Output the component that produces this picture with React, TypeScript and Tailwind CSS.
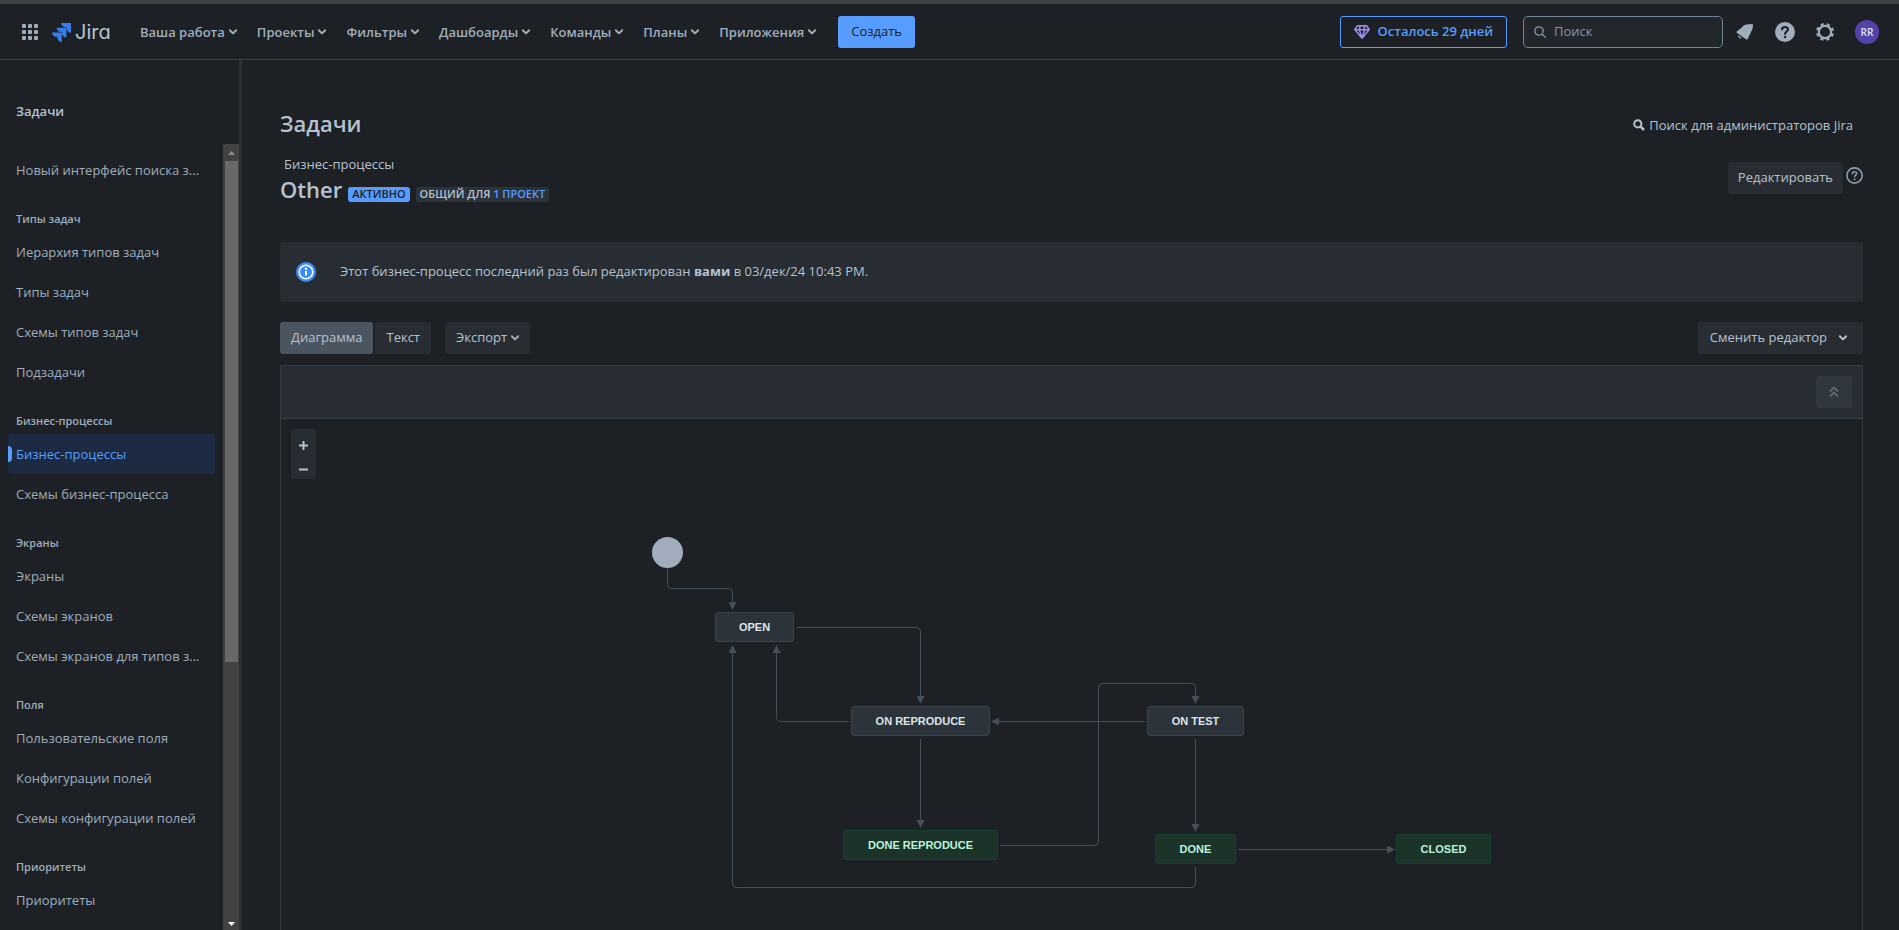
import type { ReactNode } from "react";

const menuItems = ["Ваша работа", "Проекты", "Фильтры", "Дашбоарды", "Команды", "Планы", "Приложения"];

const sections = [
  { title: "Типы задач", items: ["Иерархия типов задач", "Типы задач", "Схемы типов задач", "Подзадачи"] },
  { title: "Бизнес-процессы", items: ["Бизнес-процессы", "Схемы бизнес-процесса"] },
  { title: "Экраны", items: ["Экраны", "Схемы экранов", "Схемы экранов для типов з..."] },
  { title: "Поля", items: ["Пользовательские поля", "Конфигурации полей", "Схемы конфигурации полей"] },
  { title: "Приоритеты", items: ["Приоритеты"] },
];

type Status = { name: string; done?: boolean; x: number; y: number; w: number };

const statuses: Status[] = [
  { name: "OPEN", x: 64, y: 75, w: 79 },
  { name: "ON REPRODUCE", x: 200, y: 169, w: 139 },
  { name: "DONE REPRODUCE", done: true, x: 192, y: 293, w: 155 },
  { name: "ON TEST", x: 496, y: 169, w: 97 },
  { name: "DONE", done: true, x: 504, y: 297, w: 81 },
  { name: "CLOSED", done: true, x: 745, y: 297, w: 95 },
];

const edges = [
  "M16.5 31V47.5Q16.5 51.5 20.5 51.5H77.5Q81.5 51.5 81.5 55.5V65",
  "M146 90.5H265.5Q269.5 90.5 269.5 94.5V159",
  "M198 184.5H130.5Q125.5 184.5 125.5 180.5V116",
  "M494 184.5H348",
  "M269.5 202V283",
  "M349 308.5H443.5Q447.5 308.5 447.5 304.5V150.5Q447.5 146.5 451.5 146.5H540.5Q544.5 146.5 544.5 150.5V159",
  "M544.5 202V287",
  "M587 312.5H736",
  "M544.5 330V346.5Q544.5 350.5 540.5 350.5H85.5Q81.5 350.5 81.5 346.5V116",
];

function Chevron({ className = "" }: { className?: string }) {
  return (
    <svg viewBox="0 0 8 6" className={`h-[6px] w-2 shrink-0 ${className}`} fill="none" stroke="currentColor" strokeWidth="2" aria-hidden="true">
      <path d="M.8 1.2 4 4.4 7.2 1.2" strokeLinecap="round" strokeLinejoin="round" />
    </svg>
  );
}

function IconButton({ label, children }: { label: string; children: ReactNode }) {
  return (
    <button aria-label={label} className="flex size-8 items-center justify-center rounded-full text-[#9fadbc]">
      {children}
    </button>
  );
}

function Header() {
  return (
    <header className="flex h-[60px] shrink-0 items-center border-t-4 border-b border-t-[#404142] border-b-[#38414a] pt-px pr-5 pl-[14px]">
      <button aria-label="Приложения Atlassian" className="flex size-8 items-center justify-center text-[#9fadbc]">
        <svg viewBox="0 0 16 16" className="size-4" fill="currentColor">
          {[0, 6, 12].map((y) => [0, 6, 12].map((x) => <rect key={`${x}-${y}`} x={x} y={y} width="4" height="4" rx="1" />))}
        </svg>
      </button>
      <a href="#" className="ml-1.5 flex w-[58px] items-center gap-1 text-[#b6c2cf]">
        <svg viewBox="0 0 19 19" className="size-[19px] shrink-0" aria-hidden="true">
          <path fill="#357de8" d="M9.2 0H19v9.8a4.4 4.4 0 0 1-4.4-4.4V4.4h-1A4.4 4.4 0 0 1 9.2 0Z" />
          <path fill="#357de8" d="M4.6 4.7h9.8v9.8A4.4 4.4 0 0 1 10 10.1V9.1H9a4.4 4.4 0 0 1-4.4-4.4Z" />
          <path fill="#357de8" d="M0 9.4h9.8v9.6a4.4 4.4 0 0 1-4.4-4.4v-.8H4.4A4.4 4.4 0 0 1 0 9.4Z" />
        </svg>
        <span className="font-[Inter,sans-serif] text-[20px] leading-6 [font-feature-settings:'cv11']">Jira</span>
      </a>
      <nav className="ml-[30px] flex items-center gap-5">
        {menuItems.map((item) => (
          <button key={item} className="flex items-center gap-1 text-[13px] leading-5 font-semibold whitespace-nowrap text-[#9fadbc]">
            {item}
            <Chevron />
          </button>
        ))}
      </nav>
      <button className="ml-[22px] h-8 rounded-[3px] bg-[#579dff] px-[13px] text-[13px] font-medium text-[#1d2125]">Создать</button>
      <button className="ml-auto flex h-8 shrink-0 items-center gap-2 rounded-[3px] border border-[#579dff] px-[13px] text-[13px] font-semibold whitespace-nowrap text-[#579dff]">
        <svg viewBox="0 0 16 14" className="h-[14px] w-4" fill="none" stroke="#9f8fef" strokeWidth="1.5" strokeLinejoin="round" aria-hidden="true">
          <path d="M3.5.8h9L15.2 4.5 8 13.2.8 4.5ZM.8 4.7h14.4M5.3 4.7 8 13l2.7-8.3M5.3 4.7 6.2.8M10.7 4.7 9.8.8" />
        </svg>
        Осталось 29 дней
      </button>
      <label className="ml-4 flex h-8 w-[200px] items-center gap-2 rounded-[5px] border border-[#738496] bg-[#22272b] pl-2.5 text-[#8696a7]">
        <svg viewBox="0 0 12 12" className="size-3 shrink-0" fill="none" stroke="currentColor" strokeWidth="1.3" aria-hidden="true">
          <circle cx="5" cy="5" r="4.2" />
          <path d="m8.2 8.2 3.2 3.2" strokeLinecap="round" />
        </svg>
        <input type="search" aria-label="Поиск" placeholder="Поиск" className="w-full min-w-0 bg-transparent text-[13px] outline-none placeholder:text-[#8696a7]" />
      </label>
      <div className="ml-1.5 flex items-center gap-2">
        <IconButton label="Уведомления">
          <svg viewBox="0 0 18 18" className="size-[18px]" fill="currentColor">
            <path d="M16 1.1 10.8 1.5C8.8 1.7 7.6 2.5 6.3 3.9L.8 8.6c-.5.5-.4 1 .2 1.3l9.4 6.7c.6.4 1.1.2 1.3-.5L15 9c1-1.7 1.5-2.6 1.7-4.4L17 1.9c0-.5-.4-.9-1-.8Z" />
            <path d="M2.2 12.2a2.5 2.5 0 0 0 3.7 2.7Z" />
          </svg>
        </IconButton>
        <IconButton label="Справка">
          <svg viewBox="0 0 20 20" className="size-5">
            <circle cx="10" cy="10" r="10" fill="currentColor" />
            <path d="M7 7.6C7 5.8 8.3 4.9 10 4.9s3 1 3 2.5c0 1.9-2.9 2.2-2.9 4.5" fill="none" stroke="#1d2125" strokeWidth="2" strokeLinecap="round" />
            <circle cx="10.1" cy="15" r="1.2" fill="#1d2125" />
          </svg>
        </IconButton>
        <IconButton label="Настройки">
          <svg viewBox="0 0 18 18" className="size-[18px]" fill="none" stroke="currentColor">
            <circle cx="9" cy="9" r="6.2" strokeWidth="2.2" />
            <circle cx="9" cy="9" r="7.9" strokeWidth="2.2" strokeDasharray="3.1 3.104" strokeDashoffset="-1.55" />
          </svg>
        </IconButton>
        <button aria-label="Профиль RR" className="ml-1.5 flex size-6 items-center justify-center rounded-full bg-[#5243aa] text-[10px] font-semibold text-[#dee4ea]">RR</button>
      </div>
    </header>
  );
}

function NavItem({ label, active = false }: { label: string; active?: boolean }) {
  return (
    <li>
      <a
        href="#"
        aria-current={active ? "page" : undefined}
        className={`relative block h-10 rounded-[3px] px-2 text-[13px] leading-10 whitespace-nowrap ${active ? "bg-[#1c2b41] text-[#579dff]" : "text-[#9fadbc]"}`}
      >
        {active && <span className="absolute top-3 left-0 h-4 w-1 rounded-r-sm bg-[#579dff]" />}
        {label}
      </a>
    </li>
  );
}

function Sidebar() {
  return (
    <aside className="flex w-[242px] shrink-0 flex-col border-r-3 border-[#2c3036]">
      <h2 className="px-4 pt-[41px] pb-[23px] text-[13px] leading-5 font-semibold text-[#b6c2cf]">Задачи</h2>
      <div className="flex min-h-0 flex-1">
        <nav className="min-w-0 flex-1 overflow-hidden pt-1.5 pr-2 pl-2">
          <ul>
            <NavItem label="Новый интерфейс поиска з..." />
          </ul>
          {sections.map((s) => (
            <section key={s.title}>
              <h3 className="px-2 pt-5 pb-1 text-[11px] leading-[18px] font-semibold text-[#9fadbc]">{s.title}</h3>
              <ul>
                {s.items.map((i) => (
                  <NavItem key={i} label={i} active={i === "Бизнес-процессы"} />
                ))}
              </ul>
            </section>
          ))}
        </nav>
        <div className="flex w-4 shrink-0 flex-col items-center bg-[#424242]" aria-hidden="true">
          <svg viewBox="0 0 17 17" className="size-[17px] shrink-0">
            <path d="M5 11h7L8.5 7Z" fill="#8b8b8b" />
          </svg>
          <div className="h-[501px] w-[13px] bg-[#686868]" />
          <svg viewBox="0 0 17 17" className="mt-auto size-[17px] shrink-0">
            <path d="M5 9h7l-3.5 4Z" fill="#fff" />
          </svg>
        </div>
      </div>
    </aside>
  );
}

function Diagram() {
  return (
    <div className="relative mx-auto mt-[118px] h-[352px] w-[841px]">
      <svg width="841" height="352" className="absolute inset-0" fill="none" stroke="#454f59" aria-hidden="true">
        <defs>
          <marker id="arrow" markerUnits="userSpaceOnUse" markerWidth="8" markerHeight="8" refX="0" refY="4" orient="auto">
            <path d="M0 0 8 4 0 8Z" fill="#454f59" stroke="none" />
          </marker>
        </defs>
        <circle cx="16.5" cy="15.5" r="15.5" fill="#a1adbd" stroke="none" />
        {edges.map((d) => (
          <path key={d} d={d} markerEnd="url(#arrow)" />
        ))}
      </svg>
      {statuses.map((s) => (
        <div
          key={s.name}
          style={{ left: s.x, top: s.y, width: s.w }}
          className={`absolute flex h-[30px] items-center justify-center rounded-[3px] border font-['Liberation_Sans',Arial,sans-serif] text-[11px] font-bold whitespace-nowrap ${
            s.done ? "border-[#164030] bg-[#1c3329] text-[#baf3db]" : "border-[#3a434c] bg-[#2c333a] text-[#dee4ea]"
          }`}
        >
          {s.name}
        </div>
      ))}
    </div>
  );
}

export default function App() {
  return (
    <div className="flex h-screen flex-col overflow-hidden bg-[#1d2125] font-['Open_Sans','Noto_Sans',sans-serif] text-[13px] text-[#b6c2cf]">
      <Header />
      <div className="flex min-h-0 flex-1">
        <Sidebar />
        <main className="flex min-w-0 flex-1 flex-col overflow-hidden pt-12 pr-9 pl-[38px]">
          <div className="flex h-8 items-start justify-between">
            <h1 className="text-[22px] leading-[30px] font-semibold">Задачи</h1>
            <a href="#" className="mr-2.5 flex items-center gap-1 leading-[34px]">
              <svg viewBox="0 0 12 12" className="size-3" fill="none" stroke="currentColor" aria-hidden="true">
                <circle cx="4.8" cy="4.8" r="3.6" strokeWidth="2" />
                <path d="m7.6 7.6 3.4 3.4" strokeWidth="2.6" />
              </svg>
              Поиск для администраторов Jira
            </a>
          </div>
          <div className="mt-3.5 flex items-start justify-between">
            <div>
              <a href="#" className="block pl-1 leading-5">Бизнес-процессы</a>
              <div className="flex items-end gap-1.5">
                <h2 className="text-[22px] leading-[30px] font-semibold">Other</h2>
                <span className="mb-0.5 h-[15px] rounded-[3px] bg-[#579dff] px-1 text-[11px] leading-[14px] font-semibold text-[#1d2125]">АКТИВНО</span>
                <span className="mb-0.5 h-[15px] rounded-[3px] bg-[#2c333a] px-1 text-[11px] leading-[14px] font-semibold">
                  ОБЩИЙ ДЛЯ <a href="#" className="text-[#579dff]">1 ПРОЕКТ</a>
                </span>
              </div>
            </div>
            <div className="flex items-start gap-[3px] pt-2">
              <button className="h-8 rounded-[3px] bg-[#282d33] px-2.5">Редактировать</button>
              <button aria-label="Справка" className="pt-[5px] text-[#8c9bab]">
                <svg viewBox="0 0 17 17" className="size-[17px]" fill="none" stroke="currentColor" strokeLinecap="round">
                  <circle cx="8.5" cy="8.5" r="7.6" strokeWidth="1.6" />
                  <path d="M6.3 6.7c0-1.3 1-2 2.2-2s2.2.7 2.2 1.900c0 1.400-2.200 1.500-2.200 3.200" strokeWidth="1.6" />
                  <circle cx="8.5" cy="12.3" r=".5" fill="currentColor" />
                </svg>
              </button>
            </div>
          </div>
          <div className="mt-[38px] flex h-[60px] shrink-0 items-center rounded-[3px] bg-[#282d33] pl-4">
            <svg viewBox="0 0 20 20" className="size-5 shrink-0" aria-hidden="true">
              <circle cx="10" cy="10" r="10" fill="#388bff" />
              <circle cx="10" cy="10" r="6.8" fill="none" stroke="#fff" strokeWidth="1.6" />
              <path d="M10 9v4.5" stroke="#fff" strokeWidth="2" />
              <circle cx="10" cy="6.8" r="1.2" fill="#fff" />
            </svg>
            <p className="ml-6">
              Этот бизнес-процесс последний раз был редактирован <b>вами</b> в 03/дек/24 10:43 PM.
            </p>
          </div>
          <div className="mt-5 flex items-center">
            <button className="h-8 rounded-[3px] bg-[#4a555f] px-[11px]">Диаграмма</button>
            <button className="ml-0.5 h-8 rounded-[3px] bg-[#282d33] px-[11px]">Текст</button>
            <button className="ml-3.5 flex h-8 items-center gap-1 rounded-[3px] bg-[#282d33] px-[11px]">
              Экспорт
              <Chevron className="text-[#9fadbc]" />
            </button>
            <button className="ml-auto flex h-8 items-center gap-3 rounded-[3px] bg-[#282d33] pr-4 pl-3">
              Сменить редактор
              <Chevron />
            </button>
          </div>
          <section className="mt-[11px] flex-1 border border-b-0 border-[#343c43]">
            <div className="flex h-[53px] items-center justify-end border-b border-[#3a424b] bg-[#282d34] pr-2.5">
              <button aria-label="Свернуть" className="flex h-8 w-9 items-center justify-center rounded-[3px] bg-[#30373d] text-[#6b7178]">
                <svg viewBox="0 0 10 12" className="h-3 w-2.5" fill="none" stroke="currentColor" strokeWidth="1.6">
                  <path d="m1 5.5 4-4 4 4M1 10.500l4-4 4 4" />
                </svg>
              </button>
            </div>
            <div className="relative flow-root">
              <Diagram />
              <div className="absolute top-2.5 left-2.5 flex h-[50px] w-[25px] flex-col rounded-[3px] bg-[#282d33]">
                <button aria-label="Увеличить" className="flex flex-1 items-center justify-center pt-1.5">
                  <svg viewBox="0 0 9 9" className="size-[9px]" stroke="currentColor" strokeWidth="2">
                    <path d="M4.5 0v9M0 4.5h9" />
                  </svg>
                </button>
                <button aria-label="Уменьшить" className="flex flex-1 items-center justify-center pt-1">
                  <svg viewBox="0 0 9 9" className="size-[9px]" stroke="currentColor" strokeWidth="2">
                    <path d="M0 4.5h9" />
                  </svg>
                </button>
              </div>
            </div>
          </section>
        </main>
      </div>
    </div>
  );
}
